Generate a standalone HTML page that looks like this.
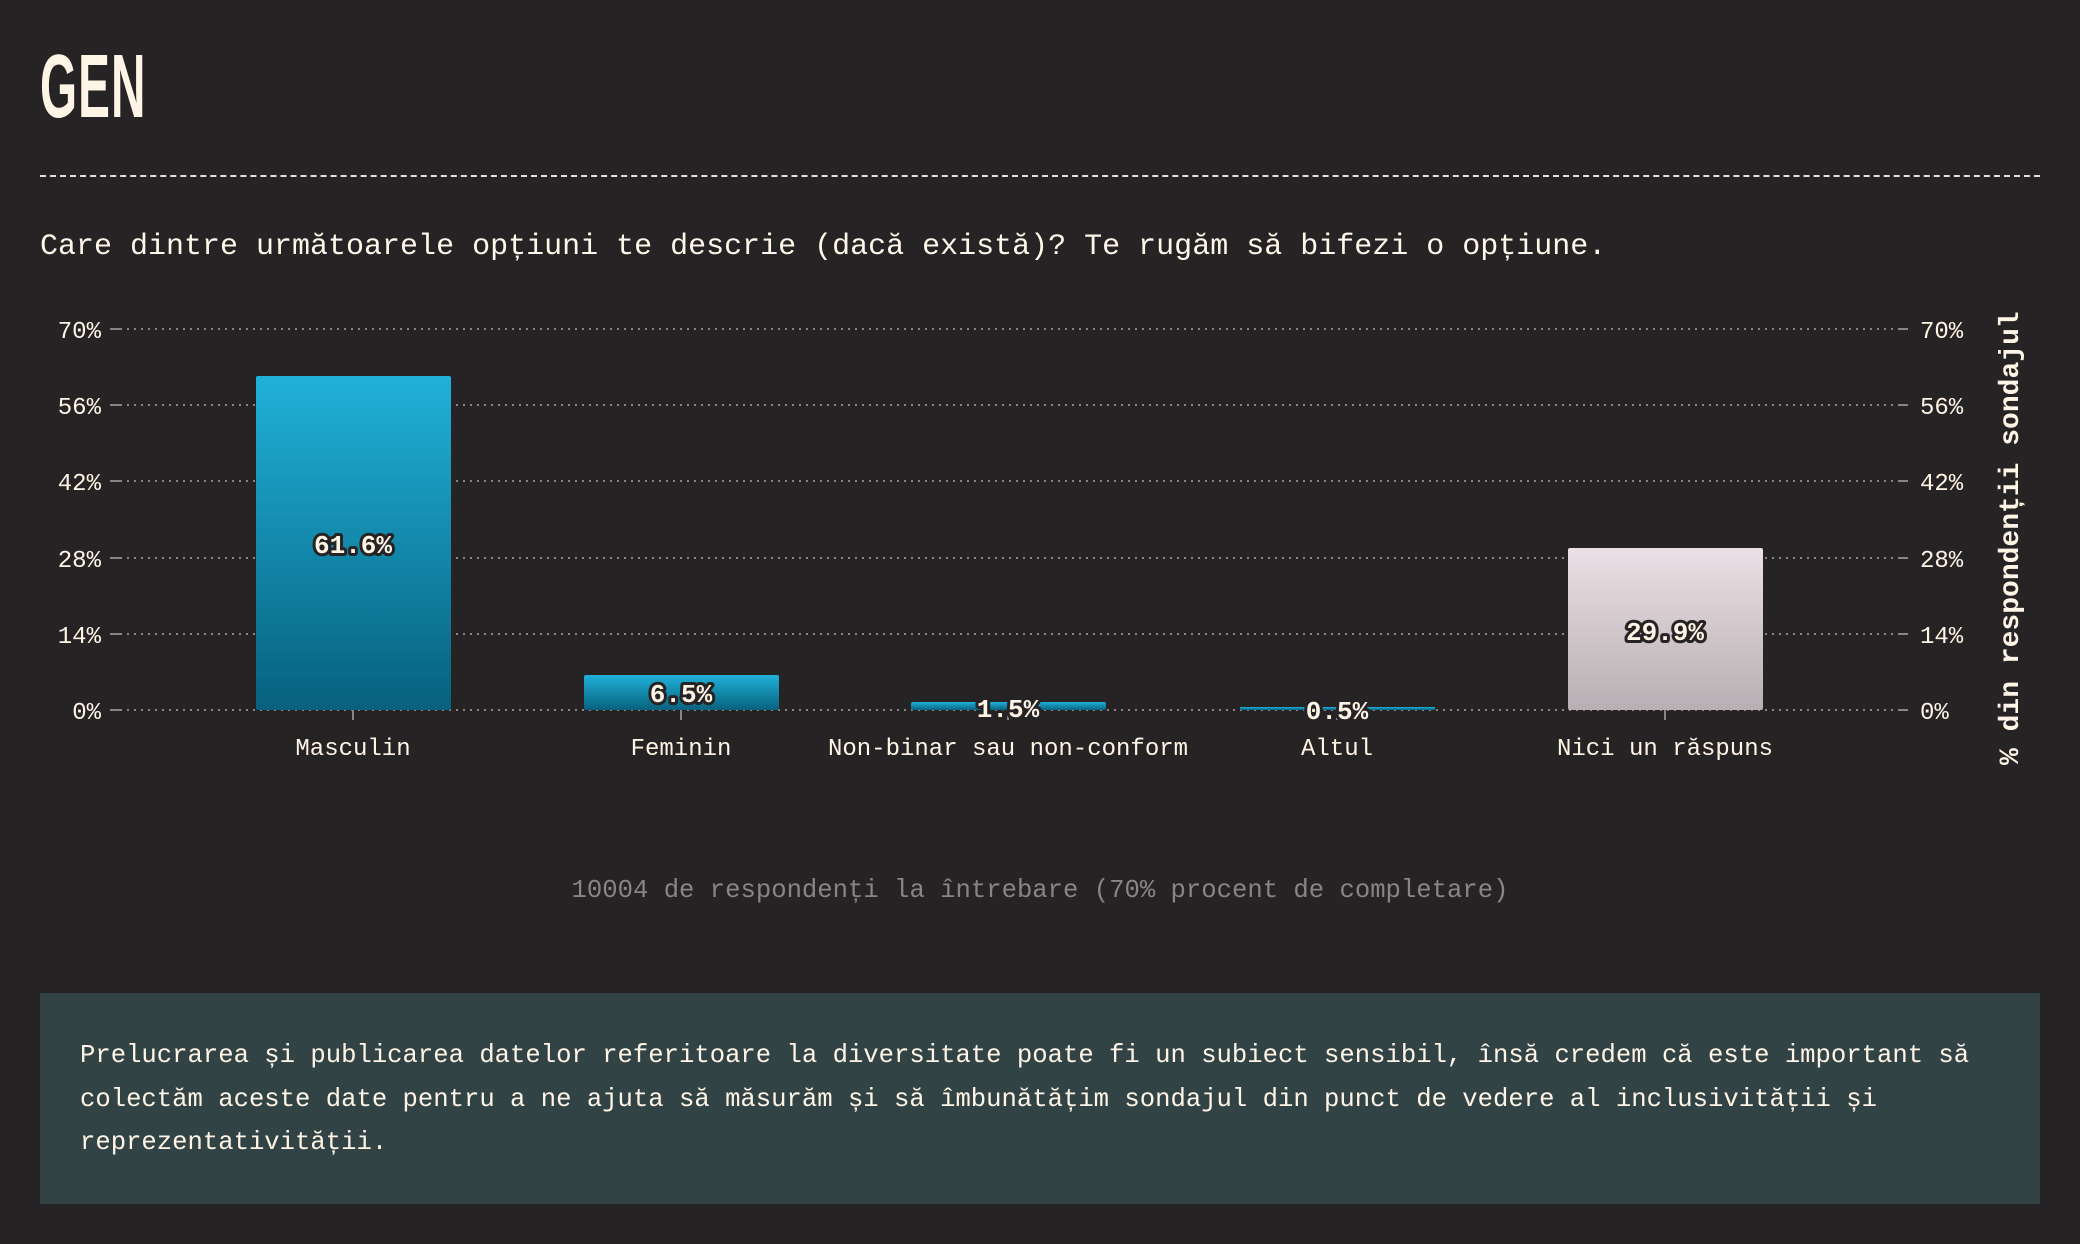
<!DOCTYPE html>
<html><head><meta charset="utf-8">
<style>
html,body{margin:0;padding:0;background:#262324;}
body{width:2080px;height:1244px;position:relative;overflow:hidden;font-family:"Liberation Mono",monospace;color:#fff7ea;}
.title{position:absolute;left:40px;top:42px;font-family:"Liberation Sans Narrow","Liberation Sans",sans-serif;font-weight:bold;font-size:90px;line-height:90px;color:#fff5e6;transform:scaleX(0.53);transform-origin:left top;letter-spacing:2px;}
.rule{position:absolute;left:40px;top:175px;width:2000px;border-top:2px dashed #e8e0d6;}
.q{position:absolute;left:40px;top:227px;font-size:30px;line-height:40px;white-space:nowrap;}
.foot{position:absolute;left:0;width:2080px;top:876px;text-align:center;color:#8a8484;font-size:25.6px;}
.box{position:absolute;left:40px;top:993px;width:2000px;height:211px;background:#324346;}
.box p{margin:0;position:absolute;left:40px;top:41px;width:1950px;font-size:25.6px;line-height:43.5px;color:#fff5e6;}
</style></head><body>
<div class="title">GEN</div>
<div class="rule"></div>
<div class="q">Care dintre următoarele opțiuni te descrie (dacă există)? Te rugăm să bifezi o opțiune.</div>
<svg style="position:absolute;left:0;top:0" width="2080" height="860" xmlns="http://www.w3.org/2000/svg">
<defs>
<linearGradient id="b" x1="0" y1="0" x2="0" y2="1"><stop offset="0" stop-color="#20b1d9"/><stop offset="1" stop-color="#07617e"/></linearGradient>
<linearGradient id="g" x1="0" y1="0" x2="0" y2="1"><stop offset="0" stop-color="#ebe0e5"/><stop offset="1" stop-color="#b7afb3"/></linearGradient>
</defs>
<g stroke="#8a8585" stroke-width="2" stroke-dasharray="2 5">
<line x1="120" y1="329" x2="1898" y2="329"/><line x1="120" y1="405" x2="1898" y2="405"/><line x1="120" y1="481" x2="1898" y2="481"/><line x1="120" y1="558" x2="1898" y2="558"/><line x1="120" y1="634" x2="1898" y2="634"/><line x1="120" y1="710" x2="1898" y2="710"/>
</g>
<g stroke="#8a8585" stroke-width="2">
<line x1="110" y1="329" x2="120" y2="329"/><line x1="110" y1="405" x2="120" y2="405"/><line x1="110" y1="481" x2="120" y2="481"/><line x1="110" y1="558" x2="120" y2="558"/><line x1="110" y1="634" x2="120" y2="634"/><line x1="110" y1="710" x2="120" y2="710"/>
<line x1="1898" y1="329" x2="1908" y2="329"/><line x1="1898" y1="405" x2="1908" y2="405"/><line x1="1898" y1="481" x2="1908" y2="481"/><line x1="1898" y1="558" x2="1908" y2="558"/><line x1="1898" y1="634" x2="1908" y2="634"/><line x1="1898" y1="710" x2="1908" y2="710"/>
<line x1="353" y1="710" x2="353" y2="720"/><line x1="681" y1="710" x2="681" y2="720"/><line x1="1008" y1="710" x2="1008" y2="720"/><line x1="1337" y1="710" x2="1337" y2="720"/><line x1="1665" y1="710" x2="1665" y2="720"/>
</g>
<g font-family="Liberation Mono,monospace" font-size="24" fill="#fff5e6">
<g text-anchor="end"><text x="101" y="338">70%</text><text x="101" y="414">56%</text><text x="101" y="490">42%</text><text x="101" y="567">28%</text><text x="101" y="643">14%</text><text x="101" y="719">0%</text></g>
<g><text x="1920" y="338">70%</text><text x="1920" y="414">56%</text><text x="1920" y="490">42%</text><text x="1920" y="567">28%</text><text x="1920" y="643">14%</text><text x="1920" y="719">0%</text></g>
<g text-anchor="middle"><text x="353" y="755">Masculin</text><text x="681" y="755">Feminin</text><text x="1008" y="755">Non-binar sau non-conform</text><text x="1337" y="755">Altul</text><text x="1665" y="755">Nici un răspuns</text></g>
</g>
<rect x="256" y="376" width="195" height="334" rx="2" fill="url(#b)"/>
<rect x="584" y="675" width="195" height="35" rx="2" fill="url(#b)"/>
<rect x="911" y="702" width="195" height="8" rx="2" fill="url(#b)"/>
<rect x="1240" y="707" width="195" height="3" fill="url(#b)"/>
<rect x="1568" y="548" width="195" height="162" rx="2" fill="url(#g)"/>
<g font-family="Liberation Mono,monospace" font-weight="bold" font-size="26" text-anchor="middle" fill="#fff5e6" stroke="#262324" stroke-width="6" paint-order="stroke" stroke-linejoin="round">
<text x="353" y="553">61.6%</text><text x="681" y="702">6.5%</text><text x="1008" y="717">1.5%</text><text x="1337" y="719">0.5%</text><text x="1665" y="640">29.9%</text>
</g>
<text transform="translate(2018,765) rotate(-90)" font-family="Liberation Mono,monospace" font-weight="bold" font-size="28" fill="#fff5e6">% din respondenții sondajul</text>
</svg>
<div class="foot">10004 de respondenți la întrebare (70% procent de completare)</div>
<div class="box"><p>Prelucrarea și publicarea datelor referitoare la diversitate poate fi un subiect sensibil, însă credem că este important să colectăm aceste date pentru a ne ajuta să măsurăm și să îmbunătățim sondajul din punct de vedere al inclusivității și reprezentativității.</p></div>
</body></html>
